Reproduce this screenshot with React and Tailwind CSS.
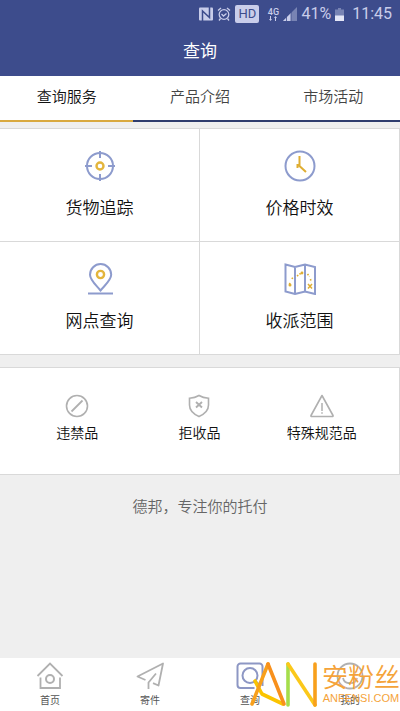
import React, {useState} from "react";

const TargetIcon = () => (
    <svg viewBox="0 0 32 32" className="size-8" fill="none" aria-hidden="true">
        <circle cx="16" cy="16" r="13" stroke="#8d9bcd" strokeWidth="2" />
        <path
            d="M16 1v7M16 24v7M1 16h7M24 16h7"
            stroke="#8d9bcd"
            strokeWidth="2"
        />
        <circle cx="16" cy="16" r="3.500" stroke="#e3b53c" strokeWidth="2.400" />
    </svg>
);

const ClockIcon = () => (
    <svg viewBox="0 0 32 32" className="size-8" fill="none" aria-hidden="true">
        <circle cx="16" cy="16" r="14.500" stroke="#8d9bcd" strokeWidth="2" />
        <path
            d="M15.500 6v10l6.500 6M13.500 14v4"
            stroke="#dfae33"
            strokeWidth="2"
        />
    </svg>
);

const PinIcon = () => (
    <svg viewBox="0 0 32 32" className="size-8" fill="none" aria-hidden="true">
        <path
            d="M16.500 27.500C12 22 6 17 6 11.700a10.600 10.600 0 0 1 21.200 0C27.200 17 21 22 16.500 27.500Z"
            stroke="#8d9bcd"
            strokeWidth="2"
        />
        <path d="M4 30.500h25" stroke="#8d9bcd" strokeWidth="2" />
        <circle cx="16.500" cy="11.500" r="3.600" stroke="#e3b53c" strokeWidth="2.400" />
    </svg>
);

const MapIcon = () => (
    <svg viewBox="0 0 32 32" className="size-8" fill="none" aria-hidden="true">
        <path
            d="M1.500 1.500 11 4 21 1.500l10 2.500v27L21 28.500 11 31l-9.500-2.500ZM11 4v27M21 1.500v27"
            stroke="#8d9bcd"
            strokeWidth="2"
        />
        <path
            d="M5.500 21.500 6 19M8 16l1-2M13 13l5-3.500M23.500 11l2 2.500M26.500 16l.5 3"
            stroke="#dfae33"
            strokeWidth="1.600"
            strokeDasharray="1.600 1.400"
        />
        <circle cx="6" cy="22" r="1.500" fill="#dfae33" />
        <circle cx="18" cy="10" r="1.400" fill="#dfae33" />
        <path d="m24 21 4 4.500M28 21l-4 4.500" stroke="#dfae33" strokeWidth="1.500" />
    </svg>
);

const ForbiddenIcon = () => (
    <svg viewBox="0 0 24 24" className="size-6" fill="none" stroke="#b0b0b0" aria-hidden="true">
        <circle cx="12" cy="12" r="10.500" strokeWidth="1.600" />
        <path d="m6.500 17.500 11-11" strokeWidth="1.800" />
    </svg>
);

const ShieldIcon = () => (
    <svg viewBox="0 0 24 24" className="size-6" fill="none" stroke="#b0b0b0" aria-hidden="true">
        <path
            d="M12 1.500C9.500 3 6 4 2.500 4.200V11c0 5.500 5 9.500 9.500 11.500 4.500-2 9.500-6 9.500-11.500V4.200C18 4 14.500 3 12 1.500Z"
            strokeWidth="1.600"
        />
        <path d="m9 8 6 5.500M15 8l-6 5.500" strokeWidth="1.900" />
    </svg>
);

const WarningIcon = () => (
    <svg viewBox="0 0 24 24" className="size-6" fill="none" stroke="#b0b0b0" aria-hidden="true">
        <path
            d="M12 1.500 23 21.500q.3 1-.8 1H1.800q-1.100 0-.8-1Z"
            strokeWidth="1.600"
            strokeLinejoin="round"
        />
        <path d="M12 9v8M12 18.200v1.500" strokeWidth="1.500" />
    </svg>
);

const HomeIcon = () => (
    <svg viewBox="0 0 28 28" className="size-7" fill="none" stroke="#b0b0b0" strokeWidth="1.800" aria-hidden="true">
        <path d="M1.500 14 14 1.500 26.500 14M4.500 15.500V26H24V15.500" />
        <circle cx="14" cy="17" r="4" strokeWidth="2" />
    </svg>
);

const SendIcon = () => (
    <svg viewBox="0 0 28 28" className="size-7" fill="none" stroke="#b0b0b0" strokeWidth="1.800" aria-hidden="true">
        <path d="M9.500 18 1.500 14.500 27 1.500l-4.500 22-5.500-2.300M20 11.500 12.500 20.500V27" strokeLinejoin="round" />
    </svg>
);

const SearchIcon = () => (
    <svg viewBox="0 0 28 28" className="size-7" fill="none" stroke="#8d97c4" strokeWidth="2" aria-hidden="true">
        <path d="M18.500 26H4.500a3 3 0 0 1-3-3V4.500a3 3 0 0 1 3-3h19a3 3 0 0 1 3 3V24" />
        <circle cx="14" cy="13.500" r="7.500" />
        <path d="m19 18.500 5.500 5.500" />
    </svg>
);

const SmileIcon = () => (
    <svg viewBox="0 0 28 28" className="size-7" fill="none" stroke="#b0b0b0" strokeWidth="1.800" aria-hidden="true">
        <circle cx="14" cy="14" r="12.500" />
        <path d="M7 16c1.500 7 12.500 7 14 0M9 9.500v2M19 9.500v2" />
    </svg>
);

const tabs = ["查询服务", "产品介绍", "市场活动"];

const services = [
    {label: "货物追踪", Icon: TargetIcon},
    {label: "价格时效", Icon: ClockIcon},
    {label: "网点查询", Icon: PinIcon},
    {label: "收派范围", Icon: MapIcon},
];

const rules = [
    {label: "违禁品", Icon: ForbiddenIcon},
    {label: "拒收品", Icon: ShieldIcon},
    {label: "特殊规范品", Icon: WarningIcon},
];

const navItems = [
    {label: "首页", Icon: HomeIcon},
    {label: "寄件", Icon: SendIcon},
    {label: "查询", Icon: SearchIcon},
    {label: "我的", Icon: SmileIcon},
];

const StatusBar = () => (
    <div className="flex h-7 items-center justify-end gap-1 pr-2 font-['Roboto',sans-serif] text-base font-normal text-[#c9cdea]">
        <svg viewBox="0 0 14 14" className="size-3.5" fill="none" aria-hidden="true">
            <path d="M0 1.500Q0 .5 1 .5h12q1 0 1 1v11q0 1-1 1H1q-1 0-1-1Z" fill="#c9cdea" />
            <path d="M3.500 14V4l7 6.500V0" stroke="#3d4c8c" strokeWidth="1.500" />
        </svg>
        <svg viewBox="0 0 14 14" className="size-3.5" fill="none" stroke="#c9cdea" strokeWidth="1.300" aria-hidden="true">
            <circle cx="7" cy="7.500" r="4.800" />
            <path d="m1 3.500 3-2.500M13 3.500 10 1M4.500 7l2 2 3-2.500M3.500 11.500 2 13.500M10.500 11.500l1.500 2" />
        </svg>
        <span className="flex h-[18px] w-6 items-center justify-center rounded-xs bg-[#c9cdea] text-[13px] text-[#3d4c8c]">
            HD
        </span>
        <span className="ml-1 flex w-3 flex-col items-center text-[9px] leading-2 font-medium">
            4G
            <svg viewBox="0 0 8 5" className="h-[5px] w-2" fill="#c9cdea" aria-hidden="true">
                <path d="M0 3h1V0h1v3h1L1.500 5ZM5 2h1v3h1V2h1L6.500 0Z" />
            </svg>
        </span>
        <svg viewBox="0 0 14 14" className="size-3.5" aria-hidden="true">
            <path d="M14 0v14H0Z" fill="#7883b3" />
            <path d="M8 6v8H0Z" fill="#c9cdea" />
            <path d="M3.500 9v5M8 5v9" stroke="#3d4c8c" strokeWidth=".8" />
        </svg>
        <span>41%</span>
        <svg viewBox="0 0 9 13" className="h-[13px] w-[9px]" aria-hidden="true">
            <path d="M3 0h3v1.500h3V13H0V1.500h3Z" fill="#7883b3" />
            <path d="M0 7.500h9V13H0Z" fill="#e4e6f6" />
        </svg>
        <span className="ml-1">11:45</span>
    </div>
);

const Watermark = () => (
    <div
        className="pointer-events-none absolute right-0 bottom-1 flex items-center gap-1 text-[#f5a33a]"
        aria-hidden="true"
    >
        <svg viewBox="0 0 68 46" className="h-[46px] w-[68px]" fill="none" strokeWidth="3.600" strokeLinecap="round">
            <path d="M5 20 12 33 33 43" stroke="#fbc400" strokeLinejoin="round" />
            <path d="M2 43 18 3" stroke="#f8a01c" />
            <path d="M18 3 34 43" stroke="#f8901c" />
            <path d="M38 44V3" stroke="#a5de4b" />
            <path d="m38 3 27 41" stroke="#fbc81a" />
            <path d="M65 44V3" stroke="#f8a01c" />
        </svg>
        <div className="flex flex-col items-center">
            <span className="text-[26px] leading-7">安粉丝</span>
            <span className="font-['Liberation_Sans',sans-serif] text-[11px] leading-4">
                ANFENSI.COM
            </span>
        </div>
    </div>
);

const App = () => {
    const [activeTab, setActiveTab] = useState("查询服务");

    return (
        <div className="flex min-h-screen flex-col bg-[#efefef] font-['Noto_Sans_CJK_SC',sans-serif] font-[350] text-[#111]">
            <header className="bg-[#3d4c8c]">
                <StatusBar />
                <h1 className="pt-2.5 pb-3.5 text-center text-[17px] leading-6 font-normal text-white">
                    查询
                </h1>
            </header>

            {/* Tabs */}
            <div className="grid grid-cols-3 bg-white" role="tablist">
                {tabs.map((tab) => (
                    <button
                        key={tab}
                        role="tab"
                        aria-selected={tab === activeTab}
                        onClick={() => setActiveTab(tab)}
                        className={
                            tab === activeTab
                                ? "h-[46px] border-b-2 border-[#d9a93f] pb-1 text-[15px]"
                                : "h-[46px] border-b-2 border-[#2f3d6e] pb-1 text-[15px] text-[#444]"
                        }
                    >
                        {tab}
                    </button>
                ))}
            </div>

            <main className="flex flex-1 flex-col pt-1.5">
                {/* Main services */}
                <div className="grid grid-cols-2 border-t border-[#d9d9d9]">
                    {services.map(({label, Icon}) => (
                        <button
                            key={label}
                            className="flex h-[113px] flex-col items-center gap-3 border-r border-b border-[#d9d9d9] bg-white pt-[21px] text-[17px]"
                        >
                            <Icon />
                            {label}
                        </button>
                    ))}
                </div>

                {/* Restricted goods */}
                <div className="mt-3 grid h-[108px] grid-cols-3 border-y border-r border-[#d9d9d9] bg-white px-4">
                    {rules.map(({label, Icon}) => (
                        <button
                            key={label}
                            className="flex flex-col items-center gap-1 pt-[26px] text-sm"
                        >
                            <Icon />
                            {label}
                        </button>
                    ))}
                </div>

                <p className="pt-5 text-center text-[15px] text-[#666]">
                    德邦，专注你的托付
                </p>
            </main>

            {/* Bottom navigation */}
            <nav className="relative grid grid-cols-4 bg-white">
                {navItems.map(({label, Icon}) => (
                    <a
                        key={label}
                        href="#"
                        className="flex h-[53px] flex-col items-center gap-0.5 pt-1 text-[10px] leading-4 font-normal text-[#555]"
                    >
                        <Icon />
                        {label}
                    </a>
                ))}
                <Watermark />
            </nav>
        </div>
    );
};

export default App;
